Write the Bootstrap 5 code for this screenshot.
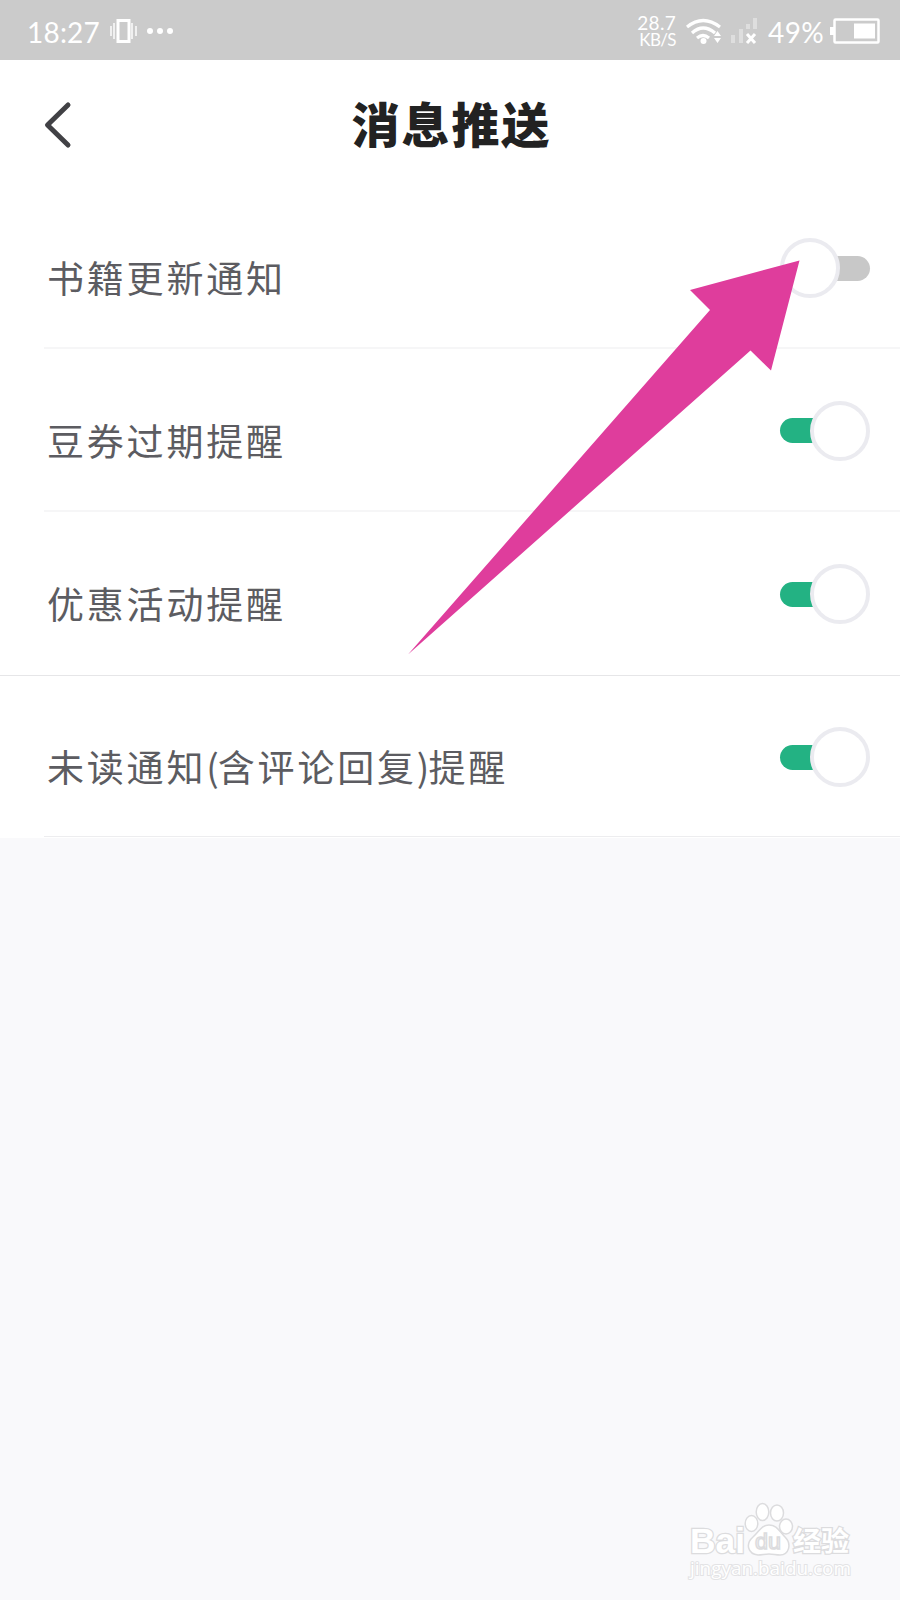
<!DOCTYPE html>
<html lang="zh-CN">
<head>
<meta charset="utf-8">
<meta name="viewport" content="width=device-width, initial-scale=1">
<title>消息推送</title>
<link href="https://cdn.jsdelivr.net/npm/bootstrap@5.3.0/dist/css/bootstrap.min.css" rel="stylesheet">
<style>
body{background:#f9f9fb;font-family:"Liberation Sans","Noto Sans CJK SC",sans-serif;min-height:1600px;overflow:hidden}
.statusbar{height:60px;background:#cbcbcb;color:#fff;font-family:Lato,sans-serif;padding-left:27px;padding-right:20px}
.statusbar svg{display:block;flex:none}
.clock{font-size:28px;line-height:60px;letter-spacing:.2px;width:83px;padding-top:3px}
.speed{font-size:19px;line-height:17px;width:42px;margin-right:10px;letter-spacing:.3px;padding-top:2px}
.speed small{font-size:17px;letter-spacing:-.6px;display:block}
.percent{font-size:28px;line-height:60px;width:62px;padding-top:3px;letter-spacing:.4px}
.topbar{height:126px;background:#fff}
.topbar h1{font-family:"Noto Sans CJK SC",sans-serif;font-weight:900;font-size:48px;letter-spacing:2px;color:#222;line-height:60px;padding-left:3px;padding-bottom:3px}
.back{left:43px;top:41px;line-height:0}
.setting{height:163px;border:0;border-radius:0;background:#fff;color:#5c5c61;padding:0 30px 0 47px}
.setting::after{content:"";position:absolute;left:44px;right:0;bottom:0;height:2px;background:#f6f6f7}
.setting.full{height:164px}
.setting.full::after{left:0;height:1px;background:#e6e6e8}
.setting:last-child{height:162px}
.setting:last-child::after{bottom:1px;height:1px;background:#ededef}
.setting-name{font-family:"Noto Sans CJK SC",sans-serif;font-size:37px;letter-spacing:2.8px;line-height:50px;margin-top:18px}
.paren{letter-spacing:-.9px}
.toggle{width:90px;height:60px}
.toggle::before{content:"";width:60px;height:25px;border-radius:13px;background:#23b283}
.knob{width:60px;height:60px;border:4px solid #ebebf0;background:#fff;border-radius:50%;margin-left:-30px;position:relative}
.toggle.off{flex-direction:row-reverse;margin-top:1px}
.toggle.off::before{background:#c8c8c8}
.toggle.off .knob{margin-left:0;margin-right:-30px}
.pointer{left:400px;top:250px}
.watermark{left:680px;top:1495px}
</style>
</head>
<body class="position-relative">
<header class="statusbar d-flex align-items-center">
  <div class="clock">18:27</div>
  <svg width="64" height="28" viewBox="0 0 64 28" fill="none" stroke="#fff"><path d="M8 4.500h11v21H8z" stroke-width="3"/><path d="M1 10v10M4 7v16M22 7v16M26 10v10" stroke-width="1.400"/><g fill="#fff" stroke="none"><circle cx="40" cy="15" r="3"/><circle cx="50" cy="15" r="3"/><circle cx="60" cy="15" r="3"/></g></svg>
  <div class="speed ms-auto text-end">28.7<small>KB/S</small></div>
  <svg width="82" height="30" viewBox="0 0 82 30"><g fill="none" stroke="#fff" stroke-width="3.200"><path d="M1 12Q17-1 34 12M6 18Q17 8 29 18M11 23Q17 18 23 23"/></g><circle cx="17.500" cy="26" r="3" fill="#fff"/><path d="M28 21l3.500-5 3.500 5zM28 23h7l-3.500 5z" fill="#fff"/><g fill="#dedede"><path d="M45 20h4v8h-4zM53 14h4v14h-4zM60 9h4v5h-4zM67 3h4v11h-4z"/></g><path d="M61 19l8 9M69 19l-8 9" stroke="#fff" stroke-width="3"/></svg>
  <div class="percent">49%</div>
  <svg width="50" height="28" viewBox="0 0 50 28"><rect x="4.500" y="3.500" width="44" height="23" rx="1" fill="none" stroke="#fff" stroke-width="2.500"/><path d="M0 11h4v8H0zM24 7.500h21v15H24z" fill="#fff"/></svg>
</header>
<nav class="topbar position-relative d-flex justify-content-center align-items-center">
  <a class="back position-absolute" href="#" aria-label="返回"><svg width="30" height="50" viewBox="0 0 30 50"><path d="M25 4L4.500 24 25 44" fill="none" stroke="#414145" stroke-width="5" stroke-linecap="round" stroke-linejoin="round"/></svg></a>
  <h1 class="m-0">消息推送</h1>
</nav>
<main class="list-group rounded-0">
  <div class="setting list-group-item d-flex justify-content-between align-items-center"><span class="setting-name">书籍更新通知</span><span class="toggle off d-flex align-items-center"><i class="knob"></i></span></div>
  <div class="setting list-group-item d-flex justify-content-between align-items-center"><span class="setting-name">豆券过期提醒</span><span class="toggle d-flex align-items-center"><i class="knob"></i></span></div>
  <div class="setting full list-group-item d-flex justify-content-between align-items-center"><span class="setting-name">优惠活动提醒</span><span class="toggle d-flex align-items-center"><i class="knob"></i></span></div>
  <div class="setting list-group-item d-flex justify-content-between align-items-center"><span class="setting-name">未读通知<span class="paren">(</span>含评论回复<span class="paren">)</span>提醒</span><span class="toggle d-flex align-items-center"><i class="knob"></i></span></div>
</main>
<svg class="pointer position-absolute" width="410" height="410" viewBox="400 250 410 410"><path d="M799.500 260.500L690 290l20 20L408 654.500 750.500 350.500l20.500 20z" fill="#df3d9c"/></svg>
<svg class="watermark position-absolute" width="200" height="95" viewBox="680 1495 200 95" fill="#fff" stroke="#dcdcde" stroke-width="1.500" font-family="'Liberation Sans','Noto Sans CJK SC',sans-serif">
  <g paint-order="stroke" stroke-width="2.500" font-weight="700"><text x="690" y="1553" font-size="35" textLength="55" lengthAdjust="spacingAndGlyphs">Bai</text><text x="793" y="1551" font-size="27" textLength="56" lengthAdjust="spacingAndGlyphs" font-family="'Noto Sans CJK SC',sans-serif">经验</text></g>
  <ellipse cx="751.500" cy="1523.500" rx="6.300" ry="8"/><ellipse cx="762.500" cy="1512" rx="6.300" ry="8.500"/><ellipse cx="777" cy="1513" rx="6.500" ry="8"/><ellipse cx="786" cy="1526.500" rx="6.500" ry="7.500"/>
  <path d="M769 1525c-8 0-10 7-16 12-8 7-5 17 5 18 4 0 7-1 11-1s7 1 11 1c9 0 12-11 5-18-6-6-8-12-16-12z"/>
  <text x="755" y="1549" font-size="22" textLength="26" lengthAdjust="spacingAndGlyphs">du</text>
  <text x="690" y="1575" font-size="18" font-family="'Open Sans',sans-serif" stroke="#e3e3e5" stroke-width="2" paint-order="stroke" textLength="161" lengthAdjust="spacingAndGlyphs">jingyan.baidu.com</text>
</svg>
<script src="https://cdn.jsdelivr.net/npm/bootstrap@5.3.0/dist/js/bootstrap.bundle.min.js"></script>
</body>
</html>
